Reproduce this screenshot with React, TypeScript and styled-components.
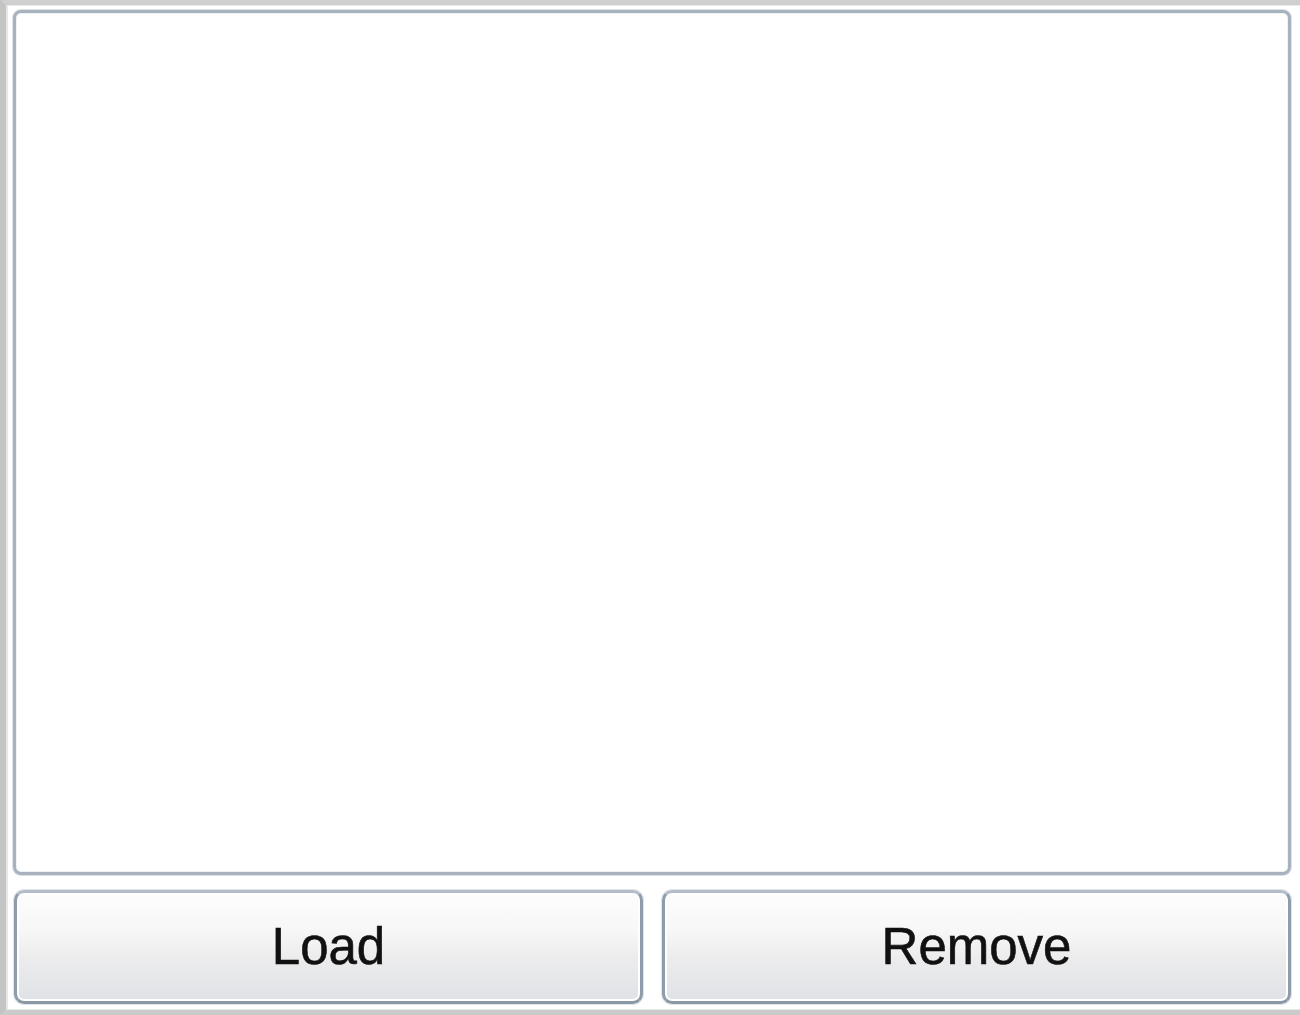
import React from "react";
import styled, { createGlobalStyle } from "styled-components";

const Global = createGlobalStyle`
  html, body { margin: 0; padding: 0; background: #ffffff; }
  #root { width: 1300px; height: 1015px; }
`;

const Frame = styled.div`
  box-sizing: border-box;
  width: 1300px;
  height: 1015px;
  border-left: 6px solid #c4c4c4;
  border-top: 5px solid #cfcfcf;
  border-bottom: 5px solid #cbcbcb;
  box-shadow: inset 2px 0 0 #e6e6e6, inset 0 1px 0 #ebebeb, inset 0 -1px 0 #e8e8e8;
  background: #ffffff;
  padding: 5px 9px 6px 7px;
  display: flex;
  flex-direction: column;
  gap: 15px;
`;

const ListBox = styled.div`
  flex: 1;
  box-sizing: border-box;
  border: 3px solid #a7b2be;
  border-radius: 8px;
  background: #ffffff;
  box-shadow: 0 0 0 1px #dde2e8, inset 0 0 0 1px #eef1f4;
`;

const ButtonRow = styled.div`
  display: grid;
  grid-template-columns: 1fr 1fr;
  column-gap: 19px;
  height: 114px;
  padding-left: 1px;
`;

const Button = styled.button`
  box-sizing: border-box;
  height: 100%;
  border: 3px solid #8e9cab;
  border-top-color: #b3bdc8;
  border-bottom-color: #8a98a6;
  border-radius: 10px;
  background: linear-gradient(
    to bottom,
    #fdfdfd 0%,
    #f7f7f7 35%,
    #ececed 60%,
    #dfe2e6 100%
  );
  box-shadow: inset 0 0 0 2px #ffffff, 0 0 0 1px #dfe4ea;
  font-family: "Liberation Sans", Arial, sans-serif;
  font-size: 51px;
  -webkit-text-stroke: 0.6px #111111;
  color: #111111;
  padding: 0 0 2px 0;
  cursor: default;
`;

export default function App() {
  return (
    <>
      <Global />
      <Frame>
        <ListBox />
        <ButtonRow>
          <Button>Load</Button>
          <Button>Remove</Button>
        </ButtonRow>
      </Frame>
    </>
  );
}
